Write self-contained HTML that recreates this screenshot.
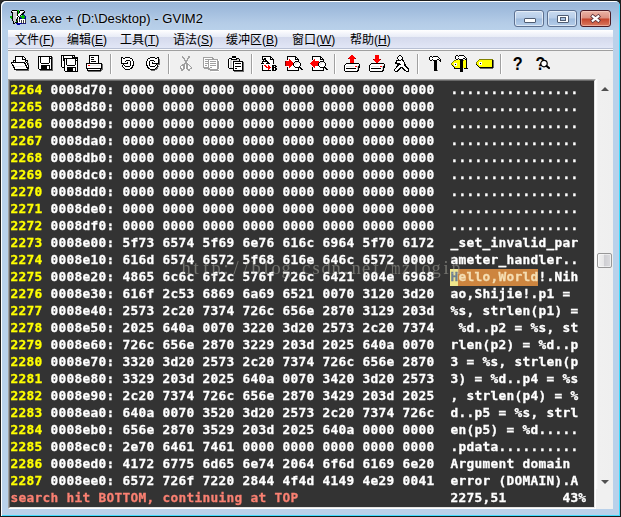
<!DOCTYPE html>
<html lang="zh-CN">
<head>
<meta charset="utf-8">
<title>a.exe + (D:\Desktop) - GVIM2</title>
<style>
html,body{margin:0;padding:0;background:#2b2b2b;}
body{width:621px;height:517px;position:relative;overflow:hidden;font-family:"Liberation Sans","Noto Sans CJK SC",sans-serif;}
.abs{position:absolute;}
#corner-tr{left:611px;top:0;width:10px;height:10px;background:#222;}
#win{left:0;top:0;width:621px;height:517px;box-sizing:border-box;border-radius:6px 6px 0 0;background:#1c1c1c;overflow:hidden;}
#frame{left:1px;top:1px;width:619px;height:515px;border-radius:5px 5px 0 0;background:#b9d1ea;overflow:hidden;}
#titlegrad{left:0;top:0;width:619px;height:29px;background:linear-gradient(#98b5d8 0px,#9db9db 6px,#b4cce7 22px,#b9d1ea 29px);}
#hl{left:0;top:0;width:619px;height:515px;border-radius:5px 5px 0 0;box-shadow:inset 1px 1px 0 #fff,inset -1px -1px 0 #3fdcff;}
#title{left:30px;top:10px;letter-spacing:0.05px;height:17px;line-height:17px;font-size:13px;color:#000;white-space:pre;text-shadow:0 0 3px rgba(255,255,255,.7);}
.cbtn{top:10px;height:17px;box-sizing:border-box;border:1px solid #5d7191;border-radius:3px;box-shadow:inset 0 0 0 1px rgba(255,255,255,.55);}
#bmin{left:514px;width:30px;background:linear-gradient(#c9dbf0 0,#b7cde8 48%,#9fbbdd 52%,#b5cde9 100%);}
#bmax{left:547px;width:30px;background:linear-gradient(#c9dbf0 0,#b7cde8 48%,#9fbbdd 52%,#b5cde9 100%);}
#bclose{left:580px;width:31px;border-color:#4b1a24;background:linear-gradient(#eab3a6 0,#dc8f7f 48%,#c5442b 52%,#d97a60 100%);box-shadow:inset 0 0 0 1px rgba(255,220,210,.5);}
#vimicon{left:10px;top:9px;width:16px;height:16px;}
#vimicon svg{display:block;width:16px;height:16px;}
#client{left:8px;top:30px;width:605px;height:479px;background:#f0f0f0;}
#menubar{left:0;top:0;width:605px;height:18px;background:linear-gradient(#ffffff 0px,#f1f3fa 4px,#e8ecf6 7px,#d4d9ec 7px,#e1e6f6 18px);}
#menuline{left:0;top:18px;width:605px;height:1px;background:#b8c0d4;}
#menuline2{left:0;top:19px;width:605px;height:1px;background:#fbfbfb;}
#tbline{left:0;top:20px;width:605px;height:1px;background:#a0a0a0;}
.mi{top:1px;height:18px;line-height:18px;font-size:12px;color:#000;white-space:pre;}
.mi u{text-decoration:underline;}
#toolbar{left:0;top:21px;width:605px;height:28px;background:#f0f0f0;}
.sep{top:3px;width:1px;height:20px;background:#a0a0a0;box-shadow:1px 0 0 #fff;}
.ic{top:3px;width:18px;height:18px;}
.ic svg{display:block;width:18px;height:18px;overflow:visible;}
#textwrap{left:0;top:49px;width:588px;height:430px;box-sizing:border-box;border-style:solid;border-width:1px;border-color:#a0a0a0 #fff #fff #a0a0a0;background:#333;}
#textin{left:0;top:0;width:586px;height:428px;box-sizing:border-box;border-style:solid;border-width:1px;border-color:#696969 #e3e3e3 #e3e3e3 #696969;background:#333;}
#text{left:0px;top:1px;width:584px;height:425px;will-change:transform;color:#fff;font-family:"DejaVu Sans Mono","Liberation Mono",monospace;font-weight:bold;font-size:12.8px;letter-spacing:0.2938px;-webkit-text-stroke:0.3px;}
.ln{height:17px;line-height:17px;white-space:pre;position:relative;top:-1.5px;left:0.5px;}
.nr{color:#ffff00;}
.warn{color:#fa8072;}
.cur{color:#708090;}
#curbg{left:440px;top:187px;width:8px;height:17px;background:#f0e68c;}
.hit{color:#f5deb3;}
#hitbg{left:448px;top:187px;width:80px;height:17px;background:#cd853f;}
#wm{left:173px;top:228px;height:20px;line-height:20px;font-family:"Liberation Serif",serif;font-size:18.5px;color:rgba(200,200,188,.42);white-space:pre;}
#wm span{display:inline-block;width:10px;text-align:center;}
#wm span.m{transform:scaleX(.66);transform-origin:0 50%;text-align:left;}
#sb{left:588px;top:49px;width:17px;height:410px;background:linear-gradient(90deg,#fdfdfd 0,#f0f0f0 2px,#efefef 100%);}
#thumb{left:1px;top:174px;width:15px;height:15px;box-sizing:border-box;border:1px solid #979797;border-radius:2px;background:linear-gradient(90deg,#f2f2f2 0,#e6e6e7 47%,#cfcfd3 50%,#dcdcdf 100%);box-shadow:inset 0 0 0 1px rgba(255,255,255,.55);}
.arr{left:5px;width:0;height:0;border-left:4px solid transparent;border-right:4px solid transparent;}
#arrup{top:8px;border-bottom:4px solid #505050;}
#arrdn{top:401px;border-top:4px solid #505050;}
</style>
</head>
<body>
<div id="corner-tr" class="abs"></div>
<div id="win" class="abs">
 <div id="frame" class="abs">
  <div id="titlegrad" class="abs"></div>
  <div id="hl" class="abs"></div>
 </div>
 <div id="vimicon" class="abs"><svg viewBox="0 0 16 16" shape-rendering="crispEdges"><path d="M2 1h5M10 1h4M1 2h1M7 2h1M9 2h1M14 2h1M1 3h2M7 3h1M9 3h1M13 3h2M2 4h1M7 4h1M12 4h2M2 5h1M7 5h1M11 5h2M2 6h1M7 6h1M10 6h1M2 7h1M8 7h1M2 8h1M7 8h1M9 8h1M2 9h1M7 9h1M9 9h1M2 10h1M6 10h1M2 11h1M6 11h1M3 12h1M7 12h1M3 13h1M5 13h3M3 14h2" stroke="#000" stroke-width="1" fill="none" transform="translate(0 .5)"/><path d="M7 1h2M8 2h1M8 3h1M8 4h1M12 6h2M0 7h2M10 7h5M0 8h2M11 8h4M1 9h1M12 9h2M6 12h1" stroke="#00b400" stroke-width="1" fill="none" transform="translate(0 .5)"/><path d="M2 2h5M10 2h4M10 3h2M9 4h2M8 5h3M8 6h2M6 7h2M6 8h1M8 8h1M8 9h1M8 10h1M10 10h5M8 11h1M10 11h1M12 11h1M14 11h1M8 12h1M10 12h1M12 12h1M14 12h1M8 13h3M12 13h1M14 13h1" stroke="#fff" stroke-width="1" fill="none" transform="translate(0 .5)"/><path d="M3 3h4M12 3h1M3 4h4M11 4h1M3 5h4M3 6h4M3 7h3M3 8h3M3 9h4M3 10h3M3 11h3M4 12h2M4 13h1" stroke="#d0d0d0" stroke-width="1" fill="none" transform="translate(0 .5)"/><path d="M13 5h1M14 6h1M15 7h1M10 8h1M15 8h1M10 9h2M14 9h2M6 14h6M13 14h1M15 14h1M7 15h3" stroke="#0000a0" stroke-width="1" fill="none" transform="translate(0 .5)"/><path d="M7 10h1M9 10h1M15 10h1M7 11h1M9 11h1M11 11h1M13 11h1M15 11h1M9 12h1M11 12h1M13 12h1M15 12h1M11 13h1M13 13h1M15 13h1M12 14h1M14 14h1" stroke="#404040" stroke-width="1" fill="none" transform="translate(0 .5)"/></svg></div>
 <div id="title" class="abs">a.exe + (D:\Desktop) - GVIM2</div>
 <div id="bmin" class="abs cbtn"><div class="abs" style="left:9px;top:7px;width:12px;height:5px;box-sizing:border-box;border:1px solid #4f5d73;border-radius:1px;background:#fff"></div></div>
 <div id="bmax" class="abs cbtn"><div class="abs" style="left:9px;top:4px;width:12px;height:8px;box-sizing:border-box;border:1px solid #4f5d73;border-radius:1px;background:#fff"><div class="abs" style="left:2px;top:1px;width:6px;height:4px;box-sizing:border-box;border:1px solid #4f5d73;background:#a9c3e2"></div></div></div>
 <div id="bclose" class="abs cbtn"><svg class="abs" style="left:8px;top:2px" width="14" height="12" viewBox="0 0 14 12"><path d="M3.8 3.3L9.3 7.6M9.3 3.3L3.8 7.6" stroke="#5a3138" stroke-width="3.8" stroke-linecap="square" fill="none"/><path d="M3.8 3.3L9.3 7.6M9.3 3.3L3.8 7.6" stroke="#fff" stroke-width="2.2" stroke-linecap="square" fill="none"/></svg></div>
 <div id="client" class="abs">
  <div id="menubar" class="abs">
   <div class="mi abs" style="left:7px">文件(<u>F</u>)</div>
   <div class="mi abs" style="left:59px">编辑(<u>E</u>)</div>
   <div class="mi abs" style="left:112px">工具(<u>T</u>)</div>
   <div class="mi abs" style="left:165px">语法(<u>S</u>)</div>
   <div class="mi abs" style="left:218px">缓冲区(<u>B</u>)</div>
   <div class="mi abs" style="left:284px">窗口(<u>W</u>)</div>
   <div class="mi abs" style="left:342px">帮助(<u>H</u>)</div>
  </div>
  <div id="menuline" class="abs"></div>
  <div id="menuline2" class="abs"></div>
  <div id="tbline" class="abs"></div>
  <div id="toolbar" class="abs">
   <div class="ic abs" style="left:3px"><svg viewBox="0 0 18 18" shape-rendering="crispEdges"><path d="M4 2h9M4 3h1M11 3h1M13 3h1M4 4h1M11 4h1M14 4h1M4 5h1M11 5h4M2 6h3M14 6h3M2 7h1M4 7h1M14 7h1M16 7h1M0 8h14M15 8h1M0 9h1M13 9h2M16 9h1M1 10h1M14 10h1M16 10h1M1 11h2M14 11h2M17 11h1M2 12h1M15 12h1M17 12h1M2 13h2M15 13h3M3 14h1M16 14h2M3 15h14" stroke="#000" stroke-width="1" fill="none" transform="translate(0 .5)"/><path d="M5 3h6M12 3h1M5 4h6M12 4h2M5 5h6M5 6h9M3 7h1M5 7h9M15 7h1M14 8h1M1 9h12M15 9h1M2 10h12M15 10h1M3 11h11M16 11h1M14 12h1M16 12h1M4 13h11M4 14h12" stroke="#fff" stroke-width="1" fill="none" transform="translate(0 .5)"/><path d="M16 8h1M17 9h1M17 10h1M17 15h1M5 16h13" stroke="#6a6a6a" stroke-width="1" fill="none" transform="translate(0 .5)"/><path d="M3 12h11" stroke="#e4e4e4" stroke-width="1" fill="none" transform="translate(0 .5)"/></svg></div>
   <div class="ic abs" style="left:28px"><svg viewBox="0 0 18 18" shape-rendering="crispEdges"><path d="M2 2h14M2 3h1M4 3h1M13 3h1M15 3h1M2 4h1M4 4h1M13 4h3M2 5h1M4 5h1M13 5h1M15 5h1M2 6h1M4 6h1M13 6h1M15 6h1M2 7h1M4 7h1M13 7h1M15 7h1M2 8h1M4 8h1M13 8h1M15 8h1M2 9h1M5 9h8M15 9h1M2 10h1M15 10h1M2 11h1M5 11h9M15 11h1M2 12h1M5 12h6M13 12h1M15 12h1M2 13h1M5 13h6M13 13h1M15 13h1M2 14h1M5 14h6M13 14h1M15 14h1M3 15h13" stroke="#000" stroke-width="1" fill="none" transform="translate(0 .5)"/><path d="M3 3h1M5 3h8M14 3h1M3 4h1M5 4h8M3 5h1M5 5h8M14 5h1M3 6h1M5 6h8M14 6h1M3 7h1M5 7h8M14 7h1M3 8h1M5 8h8M14 8h1M3 9h2M13 9h2M3 10h12M3 11h2M14 11h1M3 12h2M11 12h2M14 12h1M3 13h2M11 13h2M14 13h1M3 14h2M11 14h2M14 14h1" stroke="#fff" stroke-width="1" fill="none" transform="translate(0 .5)"/><path d="M16 3h1M16 4h1M16 5h1M16 6h1M16 7h1M16 8h1M16 9h1M16 10h1M16 11h1M16 12h1M16 13h1M16 14h1M16 15h1M4 16h13" stroke="#6a6a6a" stroke-width="1" fill="none" transform="translate(0 .5)"/></svg></div>
   <div class="ic abs" style="left:53px"><svg viewBox="0 0 18 18" shape-rendering="crispEdges"><path d="M0 1h14M0 2h1M2 2h1M11 2h1M13 2h1M0 3h1M2 3h1M11 3h6M0 4h1M2 4h15M0 5h1M2 5h2M5 5h1M14 5h1M16 5h1M0 6h1M2 6h2M5 6h1M14 6h3M0 7h1M3 7h1M5 7h1M14 7h1M16 7h1M0 8h1M3 8h1M5 8h1M14 8h1M16 8h1M0 9h1M3 9h1M5 9h1M14 9h1M16 9h1M0 10h1M3 10h1M5 10h1M14 10h1M16 10h1M0 11h1M3 11h1M6 11h8M16 11h1M0 12h1M3 12h1M16 12h1M1 13h3M6 13h9M16 13h1M3 14h1M6 14h6M14 14h1M16 14h1M3 15h1M6 15h6M14 15h1M16 15h1M3 16h1M6 16h6M14 16h1M16 16h1M4 17h13" stroke="#000" stroke-width="1" fill="none" transform="translate(0 .5)"/><path d="M1 2h1M3 2h8M12 2h1M1 3h1M3 3h8M1 4h1M1 5h1M4 5h1M6 5h8M15 5h1M1 6h1M4 6h1M6 6h8M1 7h2M4 7h1M6 7h8M15 7h1M1 8h2M4 8h1M6 8h8M15 8h1M1 9h2M4 9h1M6 9h8M15 9h1M1 10h2M4 10h1M6 10h8M15 10h1M1 11h2M4 11h2M14 11h2M1 12h2M4 12h12M4 13h2M15 13h1M4 14h2M12 14h2M15 14h1M4 15h2M12 15h2M15 15h1M4 16h2M12 16h2M15 16h1" stroke="#fff" stroke-width="1" fill="none" transform="translate(0 .5)"/></svg></div>
   <div class="ic abs" style="left:78px"><svg viewBox="0 0 18 18" shape-rendering="crispEdges"><path d="M3 1h10M3 2h1M12 2h1M3 3h1M5 3h3M12 3h1M3 4h1M12 4h1M3 5h1M5 5h3M12 5h1M3 6h1M12 6h1M3 7h1M5 7h5M12 7h1M3 8h1M12 8h1M0 9h16M0 10h1M15 10h1M0 11h1M15 11h1M0 12h1M15 12h1M0 13h1M15 13h1M0 14h16M1 15h1M14 15h1M1 16h14" stroke="#000" stroke-width="1" fill="none" transform="translate(0 .5)"/><path d="M4 2h8M4 3h1M8 3h4M4 4h8M4 5h1M8 5h4M4 6h8M4 7h1M10 7h2M4 8h8M1 10h14M1 11h1M14 11h1M1 12h14M1 13h14M2 15h12" stroke="#fff" stroke-width="1" fill="none" transform="translate(0 .5)"/><path d="M16 10h1M16 11h1M16 12h1M16 13h1M16 14h1M15 15h2M15 16h1M2 17h13" stroke="#6a6a6a" stroke-width="1" fill="none" transform="translate(0 .5)"/><path d="M2 11h2" stroke="#ff0000" stroke-width="1" fill="none" transform="translate(0 .5)"/><path d="M4 11h10" stroke="#e4e4e4" stroke-width="1" fill="none" transform="translate(0 .5)"/></svg></div>
   <div class="ic abs" style="left:111px"><svg viewBox="0 0 18 18" shape-rendering="crispEdges"><path d="M2 3h2M6 3h5M2 4h1M4 4h2M11 4h2M2 5h1M13 5h1M2 6h1M7 6h4M13 6h1M2 7h1M6 7h1M11 7h1M14 7h1M2 8h1M8 8h1M11 8h1M14 8h1M2 9h7M11 9h1M14 9h1M4 10h1M11 10h1M14 10h1M3 11h1M5 11h1M11 11h1M13 11h2M3 12h1M6 12h5M13 12h1M4 13h1M12 13h2M5 14h1M11 14h2M6 15h5" stroke="#000" stroke-width="1" fill="none" transform="translate(0 .5)"/><path d="M3 4h1M6 4h5M3 5h10M3 6h4M11 6h2M3 7h3M9 7h2M12 7h2M3 8h5M9 8h2M12 8h2M9 9h2M12 9h2M5 10h6M12 10h2M4 11h1M6 11h5M12 11h1M4 12h2M11 12h2M5 13h7M6 14h5" stroke="#fff" stroke-width="1" fill="none" transform="translate(0 .5)"/></svg></div>
   <div class="ic abs" style="left:136px"><svg viewBox="0 0 18 18" shape-rendering="crispEdges"><path d="M6 3h5M13 3h2M4 4h2M11 4h2M14 4h1M3 5h1M14 5h1M3 6h1M6 6h4M14 6h1M2 7h1M5 7h1M10 7h1M14 7h1M2 8h1M5 8h1M8 8h1M14 8h1M2 9h1M5 9h1M8 9h7M2 10h1M5 10h1M12 10h1M2 11h2M5 11h1M11 11h1M13 11h1M3 12h1M6 12h5M13 12h1M3 13h2M12 13h1M4 14h2M11 14h1M6 15h5" stroke="#000" stroke-width="1" fill="none" transform="translate(0 .5)"/><path d="M6 4h5M13 4h1M4 5h10M4 6h2M10 6h4M3 7h2M6 7h2M11 7h3M3 8h2M6 8h2M9 8h5M3 9h2M6 9h2M3 10h2M6 10h6M4 11h1M6 11h5M12 11h1M4 12h2M11 12h2M5 13h7M6 14h5" stroke="#fff" stroke-width="1" fill="none" transform="translate(0 .5)"/><path d="M15 5h1M15 6h1M15 7h1M15 8h1M15 9h1M13 10h3M14 12h1M13 13h1M12 14h2M11 15h2M7 16h4" stroke="#6a6a6a" stroke-width="1" fill="none" transform="translate(0 .5)"/></svg></div>
   <div class="ic abs" style="left:169px"><svg viewBox="0 0 18 18" shape-rendering="crispEdges"><path d="M5 2h1M11 2h2M5 3h2M11 3h2M6 4h2M10 4h2M7 5h1M10 5h1M7 6h4M8 7h2M8 8h2M7 9h4M5 10h3M9 10h3M4 11h4M9 11h2M12 11h1M3 12h1M6 12h2M9 12h2M13 12h1M3 13h1M6 13h2M9 13h2M14 13h1M3 14h2M6 14h2M9 14h2M13 14h2M4 15h3M10 15h3M4 16h2M11 16h2" stroke="#a0a0a0" stroke-width="1" fill="none" transform="translate(0 .5)"/><path d="M10 8h1M11 9h1M8 11h1M4 12h2M8 12h1M11 12h1M4 13h2M8 13h1M11 13h2M5 14h1M8 14h1M11 14h1M8 15h1" stroke="#fff" stroke-width="1" fill="none" transform="translate(0 .5)"/></svg></div>
   <div class="ic abs" style="left:194px"><svg viewBox="0 0 18 18" shape-rendering="crispEdges"><path d="M1 3h10M1 4h1M10 4h2M1 5h1M3 5h13M1 6h1M6 6h1M15 6h1M1 7h1M3 7h4M8 7h6M15 7h2M1 8h1M6 8h1M15 8h2M1 9h1M3 9h4M8 9h6M15 9h2M1 10h1M6 10h1M15 10h2M1 11h1M3 11h2M6 11h1M8 11h6M15 11h2M1 12h1M6 12h1M15 12h2M1 13h6M8 13h2M15 13h2M2 14h6M15 14h2M6 15h10M8 16h9" stroke="#a0a0a0" stroke-width="1" fill="none" transform="translate(0 .5)"/><path d="M2 4h8M2 5h1M16 5h1M2 6h4M7 6h8M16 6h1M2 7h1M7 7h1M14 7h1M17 7h1M2 8h4M7 8h8M17 8h1M2 9h1M7 9h1M14 9h1M17 9h1M2 10h4M7 10h8M17 10h1M2 11h1M5 11h1M7 11h1M14 11h1M17 11h1M2 12h4M7 12h8M17 12h1M7 13h1M10 13h5M17 13h1M8 14h7M17 14h1M16 15h1M17 16h1M9 17h8" stroke="#fff" stroke-width="1" fill="none" transform="translate(0 .5)"/></svg></div>
   <div class="ic abs" style="left:219px"><svg viewBox="0 0 18 18" shape-rendering="crispEdges"><path d="M5 2h4M5 3h4M2 4h3M9 4h3M1 5h1M4 5h6M12 5h1M1 6h1M12 6h1M1 7h1M6 7h10M1 8h1M6 8h1M15 8h1M1 9h1M6 9h1M8 9h6M15 9h1M1 10h1M6 10h1M15 10h1M1 11h1M6 11h1M15 11h1M1 12h1M6 12h1M8 12h6M15 12h1M1 13h1M6 13h1M15 13h1M2 14h5M8 14h2M15 14h1M6 15h1M15 15h1M6 16h10" stroke="#000" stroke-width="1" fill="none" transform="translate(0 .5)"/><path d="M5 4h4M2 5h2M2 6h1M5 6h1M2 7h1M5 7h1M2 8h1M5 8h1M7 8h8M2 9h1M5 9h1M7 9h1M14 9h1M2 10h1M5 10h1M7 10h8M2 11h1M5 11h1M7 11h8M2 12h1M5 12h1M7 12h1M14 12h1M2 13h1M5 13h1M7 13h8M7 14h1M10 14h5M7 15h8" stroke="#fff" stroke-width="1" fill="none" transform="translate(0 .5)"/><path d="M10 5h2M3 6h2M6 6h6M3 7h2M3 8h2M3 9h2M3 10h2M3 11h2M3 12h2M3 13h2" stroke="#d0d0d0" stroke-width="1" fill="none" transform="translate(0 .5)"/><path d="M16 8h1M16 9h1M16 10h1M16 11h1M16 12h1M16 13h1M16 14h1M16 15h1M16 16h1M7 17h10" stroke="#6a6a6a" stroke-width="1" fill="none" transform="translate(0 .5)"/></svg></div>
   <div class="ic abs" style="left:252px"><svg viewBox="0 0 18 18" shape-rendering="crispEdges"><path d="M2 2h9M2 3h1M10 3h2M2 4h1M4 4h2M10 4h1M12 4h1M2 5h4M10 5h4M3 6h1M5 6h2M13 6h1M2 7h6M13 7h1M2 8h1M7 8h2M13 8h1M1 9h3M6 9h4M13 9h1M2 11h1M12 11h4M2 12h1M12 12h2M15 12h2M2 13h1M12 13h4M2 14h1M12 14h2M15 14h2M2 15h1M12 15h2M15 15h2M2 16h9M12 16h4" stroke="#000" stroke-width="1" fill="none" transform="translate(0 .5)"/><path d="M3 3h7M3 4h1M6 4h4M11 4h1M6 5h4M2 6h1M4 6h1M7 6h6M8 7h5M3 8h4M9 8h4M4 9h2M10 9h3M2 10h11M3 11h1M6 11h2M9 11h3M3 12h2M7 12h1M10 12h2M14 12h1M3 13h3M11 13h1M3 14h5M10 14h2M14 14h1M3 15h5M9 15h3M14 15h1" stroke="#fff" stroke-width="1" fill="none" transform="translate(0 .5)"/><path d="M4 11h2M8 11h1M5 12h2M8 12h2M6 13h5M8 14h2M8 15h1" stroke="#ff0000" stroke-width="1" fill="none" transform="translate(0 .5)"/></svg></div>
   <div class="ic abs" style="left:277px"><svg viewBox="0 0 18 18" shape-rendering="crispEdges"><path d="M2 2h9M2 3h1M10 3h2M2 4h1M10 4h1M12 4h1M2 5h1M10 5h4M13 6h1M10 7h4M9 8h1M14 8h1M8 9h1M15 9h1M8 10h1M15 10h1M8 11h1M15 11h1M9 12h1M14 12h1M2 13h1M10 13h6M2 14h1M13 14h1M15 14h2M2 15h1M13 15h1M16 15h2M2 16h12" stroke="#000" stroke-width="1" fill="none" transform="translate(0 .5)"/><path d="M3 3h7M3 4h7M11 4h1M3 5h1M5 5h5M2 6h2M6 6h7M7 7h3M9 9h1M12 9h3M9 10h1M11 10h4M7 11h1M9 11h6M2 12h2M6 12h3M10 12h4M3 13h1M5 13h5M3 14h10M3 15h10" stroke="#fff" stroke-width="1" fill="none" transform="translate(0 .5)"/><path d="M4 5h1M4 6h2M1 7h6M1 8h7M1 9h7M1 10h7M1 11h6M4 12h2M4 13h1" stroke="#ff0000" stroke-width="1" fill="none" transform="translate(0 .5)"/><path d="M0 7h1M0 8h1M0 9h1M0 10h1M0 11h1" stroke="#800000" stroke-width="1" fill="none" transform="translate(0 .5)"/><path d="M10 8h4M10 9h2M10 10h1" stroke="#e4e4e4" stroke-width="1" fill="none" transform="translate(0 .5)"/></svg></div>
   <div class="ic abs" style="left:302px"><svg viewBox="0 0 18 18" shape-rendering="crispEdges"><path d="M2 2h9M2 3h1M10 3h2M2 4h1M10 4h1M12 4h1M2 5h1M10 5h4M13 6h1M10 7h4M9 8h1M14 8h1M8 9h1M15 9h1M8 10h1M15 10h1M8 11h1M15 11h1M9 12h1M14 12h1M2 13h1M10 13h6M2 14h1M13 14h1M15 14h2M2 15h1M13 15h1M16 15h2M2 16h12" stroke="#000" stroke-width="1" fill="none" transform="translate(0 .5)"/><path d="M3 3h7M3 4h7M11 4h1M3 5h1M5 5h5M2 6h1M5 6h8M9 7h1M9 9h1M12 9h3M9 10h1M11 10h4M9 11h6M2 12h1M5 12h4M10 12h4M3 13h1M5 13h5M3 14h10M3 15h10" stroke="#fff" stroke-width="1" fill="none" transform="translate(0 .5)"/><path d="M4 5h1M3 6h2M2 7h7M1 8h8M0 9h8M1 10h7M2 11h6M3 12h2M4 13h1" stroke="#ff0000" stroke-width="1" fill="none" transform="translate(0 .5)"/><path d="M10 8h4M10 9h2M10 10h1" stroke="#e4e4e4" stroke-width="1" fill="none" transform="translate(0 .5)"/></svg></div>
   <div class="ic abs" style="left:335px"><svg viewBox="0 0 18 18" shape-rendering="crispEdges"><path d="M8 1h2M7 2h4M6 3h6M6 4h6M7 5h4M7 6h4M7 7h4M7 8h4M12 12h2" stroke="#ff0000" stroke-width="1" fill="none" transform="translate(0 .5)"/><path d="M5 4h1M12 4h1" stroke="#800000" stroke-width="1" fill="none" transform="translate(0 .5)"/><path d="M3 9h13M2 10h1M16 10h1M1 11h1M16 11h1M1 12h1M15 12h2M1 13h1M15 13h2M1 14h1M3 14h10M15 14h1M1 15h1M15 15h1M1 16h1M14 16h2M2 17h13" stroke="#000" stroke-width="1" fill="none" transform="translate(0 .5)"/><path d="M3 10h13M2 11h13M2 12h1M11 12h1M2 13h12M2 14h1M13 14h1M2 15h12M2 16h12" stroke="#fff" stroke-width="1" fill="none" transform="translate(0 .5)"/><path d="M15 11h1M14 12h1M14 13h1M14 14h1M14 15h1" stroke="#d0d0d0" stroke-width="1" fill="none" transform="translate(0 .5)"/><path d="M3 12h8" stroke="#e4e4e4" stroke-width="1" fill="none" transform="translate(0 .5)"/></svg></div>
   <div class="ic abs" style="left:360px"><svg viewBox="0 0 18 18" shape-rendering="crispEdges"><path d="M7 1h4M7 2h4M7 3h4M7 4h4M6 5h6M6 6h6M7 7h4M8 8h2M12 12h2" stroke="#ff0000" stroke-width="1" fill="none" transform="translate(0 .5)"/><path d="M5 5h1M12 5h1" stroke="#800000" stroke-width="1" fill="none" transform="translate(0 .5)"/><path d="M3 9h13M2 10h1M16 10h1M1 11h1M16 11h1M1 12h1M15 12h2M1 13h1M15 13h2M1 14h1M3 14h10M15 14h1M1 15h1M15 15h1M1 16h1M14 16h2M2 17h13" stroke="#000" stroke-width="1" fill="none" transform="translate(0 .5)"/><path d="M3 10h13M2 11h13M2 12h1M11 12h1M2 13h12M2 14h1M13 14h1M2 15h12M2 16h12" stroke="#fff" stroke-width="1" fill="none" transform="translate(0 .5)"/><path d="M15 11h1M14 12h1M14 13h1M14 14h1M14 15h1" stroke="#d0d0d0" stroke-width="1" fill="none" transform="translate(0 .5)"/><path d="M3 12h8" stroke="#e4e4e4" stroke-width="1" fill="none" transform="translate(0 .5)"/></svg></div>
   <div class="ic abs" style="left:385px"><svg viewBox="0 0 18 18" shape-rendering="crispEdges"><path d="M6 1h2M5 2h1M8 2h1M4 3h1M9 3h1M4 4h1M9 4h1M5 5h1M8 5h2M3 6h5M9 6h2M3 7h1M10 7h1M2 8h2M11 8h1M2 9h5M11 9h1M4 10h4M11 10h2M4 11h2M11 11h2M3 12h2M12 12h2M3 13h1M7 13h3M13 13h2M2 14h1M6 14h2M9 14h2M14 14h2M1 15h1M5 15h2M10 15h2M15 15h1M1 16h1M4 16h2M11 16h2M15 16h1M2 17h3M13 17h3" stroke="#000" stroke-width="1" fill="none" transform="translate(0 .5)"/><path d="M6 2h2M5 3h4M5 4h4M6 5h2M8 6h1M4 7h6M4 8h7M7 9h4M8 10h3M6 11h5M5 12h7M4 13h3M10 13h3M3 14h3M11 14h3M2 15h3M12 15h3M2 16h2M13 16h2" stroke="#fff" stroke-width="1" fill="none" transform="translate(0 .5)"/></svg></div>
   <div class="ic abs" style="left:418px"><svg viewBox="0 0 18 18" shape-rendering="crispEdges"><path d="M4 2h2M7 2h5M3 3h1M6 3h1M12 3h1M3 4h1M13 4h1M3 5h1M6 5h1M11 5h2M14 5h1M4 6h2M7 6h4M13 6h2M8 7h3M14 7h1M8 8h3M8 9h3M8 10h3M8 11h3M8 12h3M8 13h3M8 14h3M8 15h3M8 16h3" stroke="#000" stroke-width="1" fill="none" transform="translate(0 .5)"/><path d="M4 3h2M7 3h5M4 4h9M4 5h2M7 5h4M13 5h1" stroke="#fff" stroke-width="1" fill="none" transform="translate(0 .5)"/><path d="M11 16h1" stroke="#6a6a6a" stroke-width="1" fill="none" transform="translate(0 .5)"/></svg></div>
   <div class="ic abs" style="left:443px"><svg viewBox="0 0 18 18" shape-rendering="crispEdges"><path d="M5 1h2M8 1h5M4 2h1M7 2h1M13 2h1M4 3h1M14 3h1M4 4h1M7 4h1M12 4h2M15 4h1M5 5h2M8 5h4M14 5h2M9 6h3M15 6h1M9 7h3M15 7h1M9 8h3M15 8h1M9 9h3M15 9h1M4 10h1M9 10h3M15 10h1M1 11h1M9 11h3M15 11h1M2 12h1M9 12h3M15 12h1M3 13h1M9 13h3M15 13h1M3 14h9M13 14h4M9 15h3M9 16h3M9 17h3" stroke="#000" stroke-width="1" fill="none" transform="translate(0 .5)"/><path d="M5 2h2M8 2h5M5 3h9M5 4h2M8 4h4M14 4h1M3 9h3M3 10h1M5 10h1M3 11h3" stroke="#fff" stroke-width="1" fill="none" transform="translate(0 .5)"/><path d="M3 6h2M12 6h1M2 7h1M1 8h1M0 9h1M0 10h1" stroke="#808000" stroke-width="1" fill="none" transform="translate(0 .5)"/><path d="M5 6h4M13 6h2M3 7h6M12 7h3M2 8h7M12 8h3M1 9h2M6 9h3M12 9h3M1 10h2M6 10h3M12 10h3M2 11h1M6 11h3M12 11h3M3 12h6M12 12h3M4 13h5M12 13h3" stroke="#ffff00" stroke-width="1" fill="none" transform="translate(0 .5)"/></svg></div>
   <div class="ic abs" style="left:468px"><svg viewBox="0 0 18 18" shape-rendering="crispEdges"><path d="M3 5h14M2 6h1M1 7h1M0 8h1M0 9h1" stroke="#808000" stroke-width="1" fill="none" transform="translate(0 .5)"/><path d="M3 6h13M2 7h14M1 8h2M6 8h10M1 9h2M6 9h10M1 10h2M6 10h10M2 11h14M3 12h13" stroke="#ffff00" stroke-width="1" fill="none" transform="translate(0 .5)"/><path d="M16 6h1M16 7h1M16 8h1M4 9h1M16 9h1M0 10h1M16 10h1M1 11h1M16 11h1M2 12h1M16 12h1M3 13h14" stroke="#000" stroke-width="1" fill="none" transform="translate(0 .5)"/><path d="M17 6h1M17 7h1M17 8h1M17 9h1M17 10h1M17 11h1M17 12h1M17 13h1M4 14h13" stroke="#6a6a6a" stroke-width="1" fill="none" transform="translate(0 .5)"/><path d="M3 8h3M3 9h1M5 9h1M3 10h3" stroke="#fff" stroke-width="1" fill="none" transform="translate(0 .5)"/></svg></div>
   <div class="ic abs" style="left:501px"><svg viewBox="0 0 18 18" shape-rendering="crispEdges"><text x="4.2" y="16.3" transform="scale(.88 1)" font-family="Liberation Sans,sans-serif" font-weight="bold" font-size="18.5" fill="#000">?</text></svg></div>
   <div class="ic abs" style="left:526px"><svg viewBox="0 0 18 18" shape-rendering="crispEdges"><text x="1.6" y="16.1" transform="scale(.88 1)" font-family="Liberation Sans,sans-serif" font-weight="bold" font-size="18" fill="#000">?</text><g shape-rendering="auto"><circle cx="10" cy="9.6" r="3.2" fill="#fff" stroke="#000" stroke-width="1.2"/><path d="M12.6 12L15 14" stroke="#000" stroke-width="2.2" stroke-linecap="round"/></g></svg></div>
   <div class="sep abs" style="left:102px"></div>
   <div class="sep abs" style="left:160px"></div>
   <div class="sep abs" style="left:243px"></div>
   <div class="sep abs" style="left:326px"></div>
   <div class="sep abs" style="left:409px"></div>
   <div class="sep abs" style="left:492px"></div>
  </div>
  <div id="textwrap" class="abs"><div id="textin" class="abs"><div id="text" class="abs"><div id="curbg" class="abs"></div><div id="hitbg" class="abs"></div>
<div class="ln"><span class="nr">2264</span> 0008d70: 0000 0000 0000 0000 0000 0000 0000 0000  ................</div>
<div class="ln"><span class="nr">2265</span> 0008d80: 0000 0000 0000 0000 0000 0000 0000 0000  ................</div>
<div class="ln"><span class="nr">2266</span> 0008d90: 0000 0000 0000 0000 0000 0000 0000 0000  ................</div>
<div class="ln"><span class="nr">2267</span> 0008da0: 0000 0000 0000 0000 0000 0000 0000 0000  ................</div>
<div class="ln"><span class="nr">2268</span> 0008db0: 0000 0000 0000 0000 0000 0000 0000 0000  ................</div>
<div class="ln"><span class="nr">2269</span> 0008dc0: 0000 0000 0000 0000 0000 0000 0000 0000  ................</div>
<div class="ln"><span class="nr">2270</span> 0008dd0: 0000 0000 0000 0000 0000 0000 0000 0000  ................</div>
<div class="ln"><span class="nr">2271</span> 0008de0: 0000 0000 0000 0000 0000 0000 0000 0000  ................</div>
<div class="ln"><span class="nr">2272</span> 0008df0: 0000 0000 0000 0000 0000 0000 0000 0000  ................</div>
<div class="ln"><span class="nr">2273</span> 0008e00: 5f73 6574 5f69 6e76 616c 6964 5f70 6172  _set_invalid_par</div>
<div class="ln"><span class="nr">2274</span> 0008e10: 616d 6574 6572 5f68 616e 646c 6572 0000  ameter_handler..</div>
<div class="ln"><span class="nr">2275</span> 0008e20: 4865 6c6c 6f2c 576f 726c 6421 004e 6968  <span class="cur">H</span><span class="hit">ello,World</span>!.Nih</div>
<div class="ln"><span class="nr">2276</span> 0008e30: 616f 2c53 6869 6a69 6521 0070 3120 3d20  ao,Shijie!.p1 = </div>
<div class="ln"><span class="nr">2277</span> 0008e40: 2573 2c20 7374 726c 656e 2870 3129 203d  %s, strlen(p1) =</div>
<div class="ln"><span class="nr">2278</span> 0008e50: 2025 640a 0070 3220 3d20 2573 2c20 7374   %d..p2 = %s, st</div>
<div class="ln"><span class="nr">2279</span> 0008e60: 726c 656e 2870 3229 203d 2025 640a 0070  rlen(p2) = %d..p</div>
<div class="ln"><span class="nr">2280</span> 0008e70: 3320 3d20 2573 2c20 7374 726c 656e 2870  3 = %s, strlen(p</div>
<div class="ln"><span class="nr">2281</span> 0008e80: 3329 203d 2025 640a 0070 3420 3d20 2573  3) = %d..p4 = %s</div>
<div class="ln"><span class="nr">2282</span> 0008e90: 2c20 7374 726c 656e 2870 3429 203d 2025  , strlen(p4) = %</div>
<div class="ln"><span class="nr">2283</span> 0008ea0: 640a 0070 3520 3d20 2573 2c20 7374 726c  d..p5 = %s, strl</div>
<div class="ln"><span class="nr">2284</span> 0008eb0: 656e 2870 3529 203d 2025 640a 0000 0000  en(p5) = %d.....</div>
<div class="ln"><span class="nr">2285</span> 0008ec0: 2e70 6461 7461 0000 0000 0000 0000 0000  .pdata..........</div>
<div class="ln"><span class="nr">2286</span> 0008ed0: 4172 6775 6d65 6e74 2064 6f6d 6169 6e20  Argument domain </div>
<div class="ln"><span class="nr">2287</span> 0008ee0: 6572 726f 7220 2844 4f4d 4149 4e29 0041  error (DOMAIN).A</div>
<div class="ln"><span class="warn">search hit BOTTOM, continuing at TOP</span>                   2275,51       43%</div>
</div></div></div>
  <div id="wm" class="abs"><span>h</span><span>t</span><span>t</span><span>p</span><span>:</span><span>/</span><span>/</span><span>b</span><span>l</span><span>o</span><span>g</span><span>.</span><span>c</span><span>s</span><span>d</span><span>n</span><span>.</span><span>n</span><span>e</span><span>t</span><span>/</span><span class="m">m</span><span>z</span><span>l</span><span>o</span><span>g</span><span>i</span><span>n</span></div>
  <div id="sb" class="abs">
   <div id="arrup" class="abs arr"></div>
   <div id="thumb" class="abs"></div>
   <div id="arrdn" class="abs arr"></div>
  </div>
 </div>
</div>
</body>
</html>
